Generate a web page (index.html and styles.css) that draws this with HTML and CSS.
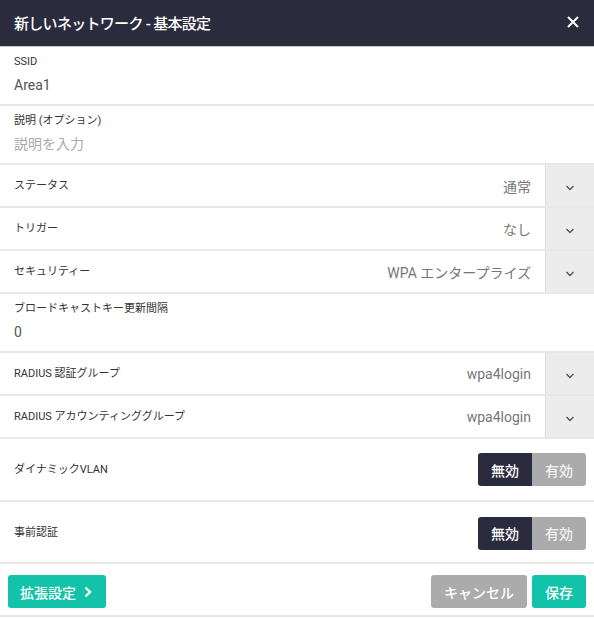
FILE: index.html
```html
<!DOCTYPE html>
<html lang="ja">
<head>
<meta charset="utf-8">
<title>新しいネットワーク - 基本設定</title>
<link rel="stylesheet" href="styles.css">
</head>
<body>
<div class="dialog">
  <header class="hdr">
    <h1 class="title">新しいネットワーク - 基本設定</h1>
    <button class="close" aria-label="閉じる">
      <svg width="12" height="12" viewBox="0 0 12 12"><path d="M1 1 L11 11 M11 1 L1 11" stroke="#fff" stroke-width="2" fill="none"/></svg>
    </button>
  </header>

  <div class="row field">
    <div class="lbl">SSID</div>
    <div class="val">Area1</div>
  </div>
  <div class="row field">
    <div class="lbl">説明 (オプション)</div>
    <div class="val ph">説明を入力</div>
  </div>

  <div class="row select">
    <span class="lbl">ステータス</span>
    <span class="sel-val">通常</span>
    <span class="caret"><svg width="10" height="6" viewBox="0 0 10 6"><path d="M1.5 1 L5 4.5 L8.5 1" stroke="#555" stroke-width="1.4" fill="none"/></svg></span>
  </div>
  <div class="row select">
    <span class="lbl">トリガー</span>
    <span class="sel-val">なし</span>
    <span class="caret"><svg width="10" height="6" viewBox="0 0 10 6"><path d="M1.5 1 L5 4.5 L8.5 1" stroke="#555" stroke-width="1.4" fill="none"/></svg></span>
  </div>
  <div class="row select">
    <span class="lbl">セキュリティー</span>
    <span class="sel-val">WPA エンタープライズ</span>
    <span class="caret"><svg width="10" height="6" viewBox="0 0 10 6"><path d="M1.5 1 L5 4.5 L8.5 1" stroke="#555" stroke-width="1.4" fill="none"/></svg></span>
  </div>

  <div class="row field">
    <div class="lbl">ブロードキャストキー更新間隔</div>
    <div class="val">0</div>
  </div>

  <div class="row select">
    <span class="lbl">RADIUS 認証グループ</span>
    <span class="sel-val">wpa4login</span>
    <span class="caret"><svg width="10" height="6" viewBox="0 0 10 6"><path d="M1.5 1 L5 4.5 L8.5 1" stroke="#555" stroke-width="1.4" fill="none"/></svg></span>
  </div>
  <div class="row select">
    <span class="lbl">RADIUS アカウンティンググループ</span>
    <span class="sel-val">wpa4login</span>
    <span class="caret"><svg width="10" height="6" viewBox="0 0 10 6"><path d="M1.5 1 L5 4.5 L8.5 1" stroke="#555" stroke-width="1.4" fill="none"/></svg></span>
  </div>

  <div class="row toggle-row tr1">
    <span class="lbl">ダイナミックVLAN</span>
    <div class="seg"><span class="seg-on">無効</span><span class="seg-off">有効</span></div>
  </div>
  <div class="row toggle-row tr2">
    <span class="lbl">事前認証</span>
    <div class="seg"><span class="seg-on">無効</span><span class="seg-off">有効</span></div>
  </div>

  <footer class="row foot">
    <button class="btn teal adv">拡張設定
      <svg width="8" height="12" viewBox="0 0 8 12"><path d="M1.5 1.5 L6 6 L1.5 10.5" stroke="#fff" stroke-width="2.4" fill="none"/></svg>
    </button>
    <div class="foot-right">
      <button class="btn gray">キャンセル</button>
      <button class="btn teal">保存</button>
    </div>
  </footer>
</div>
</body>
</html>
```

FILE: styles.css
```css
* { box-sizing: border-box; }
html, body { margin: 0; padding: 0; background: #fff; }
body {
  font-family: "Roboto", "Noto Sans CJK JP", sans-serif;
  color: #333;
}
.dialog { width: 594px; }

.hdr {
  height: 47px;
  background: #2a2b3d;
  border-bottom: 1px solid #c9c9cf;
  display: flex;
  align-items: center;
  justify-content: space-between;
  padding: 0 15px 2px 14px;
}
.title {
  margin: 0;
  color: #fff;
  font-size: 15px;
  font-weight: 500;
  letter-spacing: -0.7px;
}
.close {
  background: none;
  border: 0;
  padding: 0;
  width: 12px;
  height: 12px;
  display: flex;
  cursor: pointer;
}

.row { border-bottom: 2px solid #e8e8e8; }

.field {
  height: 59px;
  padding: 8px 14px 0;
}
.lbl {
  font-size: 11px;
  line-height: 14px;
  color: #333;
}
.val {
  margin-top: 6px;
  font-size: 14px;
  line-height: 20px;
  color: #555;
}
.val.ph { color: #aaa; }

.select {
  height: 43px;
  display: flex;
  align-items: center;
  padding-left: 14px;
}
.select .lbl { flex: 1; }
.sel-val {
  font-size: 14px;
  color: #777;
  padding-right: 14px;
}
.caret {
  width: 49px;
  align-self: stretch;
  background: #ececec;
  border-left: 1px solid #dcdcdc;
  display: flex;
  align-items: center;
  justify-content: center;
  padding-top: 5px;
}

.toggle-row {
  display: flex;
  align-items: center;
  justify-content: space-between;
  padding: 0 8px 0 14px;
}
.tr1 { height: 63px; }
.tr2 { height: 62px; padding-top: 2px; }
.seg {
  display: flex;
  height: 33px;
  border-radius: 3px;
  overflow: hidden;
}
.seg span {
  width: 54px;
  display: flex;
  align-items: center;
  justify-content: center;
  font-size: 14px;
  font-weight: 500;
}
.seg-on { background: #2a2b3d; color: #fff; }
.seg-off { background: #ababab; color: #f2f2f2; }

.foot {
  height: 53px;
  display: flex;
  justify-content: space-between;
  align-items: flex-start;
  padding: 11px 8px 0;
}
.foot-right { display: flex; gap: 5px; }
.btn {
  height: 33px;
  border: 0;
  border-radius: 3px;
  padding: 0 12px;
  font-family: inherit;
  font-size: 14px;
  font-weight: 500;
  color: #fff;
  display: flex;
  align-items: center;
  cursor: pointer;
}
.teal { background: #12c3aa; }
.gray { background: #ababab; }
.adv { width: 98px; gap: 8px; }
.foot-right .gray { width: 96px; justify-content: center; }
.foot-right .teal { width: 54px; justify-content: center; }
```
